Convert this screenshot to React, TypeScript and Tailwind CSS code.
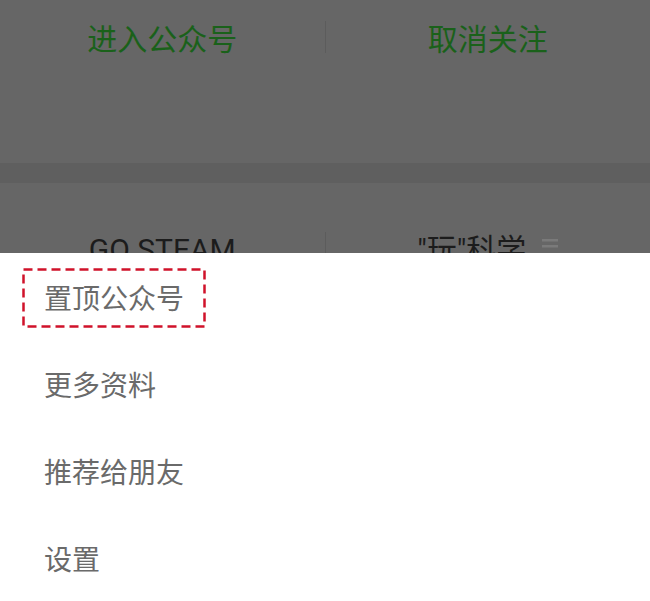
import React from 'react'

const font = { fontFamily: '"Noto Sans CJK SC", "Noto Sans", sans-serif' }
const latin = { fontFamily: 'Roboto, "Noto Sans CJK SC", sans-serif' }

function MenuIcon() {
  return (
    <svg width="16" height="14" viewBox="0 0 16 14" className="ml-[16px] mt-[3px]">
      <rect x="0" y="1" width="16" height="2.5" fill="#7a7a7a" />
      <rect x="0" y="7" width="16" height="2.5" fill="#7a7a7a" />
    </svg>
  )
}

function MenuItem({ label, marked }: { label: string; marked?: boolean }) {
  return (
    <div className="h-[87px] flex items-center pl-[44px]">
      <span className="relative text-[28px] leading-none text-[#6a6a6a]">
        {label}
        {marked && (
          <svg className="absolute left-[-22px] top-[-15px]" width="184" height="60" viewBox="0 0 184 60">
            <rect
              x="1.5"
              y="1.5"
              width="181"
              height="57"
              fill="none"
              stroke="#d0122a"
              strokeWidth="2.5"
              strokeDasharray="9 5"
            />
          </svg>
        )}
      </span>
    </div>
  )
}

export default function App() {
  return (
    <div className="w-[650px] h-[601px] overflow-hidden bg-[#666666] flex flex-col" style={font}>
      <div className="flex items-center h-[74px] shrink-0">
        <div className="flex-1 text-center text-[30px] leading-none text-[#1a611a]">进入公众号</div>
        <div className="w-px h-[32px] bg-[#5c5c5c]" />
        <div className="flex-1 text-center text-[30px] leading-none text-[#1a611a]">取消关注</div>
      </div>
      <div className="h-[89px] shrink-0" />
      <div className="h-[20px] shrink-0 bg-[#5f5f5f]" />
      <div className="h-[70px] shrink-0 overflow-hidden">
        <div className="pt-[52px]">
          <div className="flex items-start h-[60px]">
            <div className="flex-1 text-center text-[30px] leading-none text-[#1c1c1c]" style={latin}>
              GO STEAM
            </div>
            <div className="w-px h-[32px] bg-[#5c5c5c] mt-[-3px]" />
            <div className="flex-1 flex items-start justify-center text-[30px] leading-none text-[#1c1c1c]">
              <span style={latin}>"玩"科学</span>
              <MenuIcon />
            </div>
          </div>
        </div>
      </div>
      <div className="flex-1 bg-white">
        <MenuItem label="置顶公众号" marked />
        <MenuItem label="更多资料" />
        <MenuItem label="推荐给朋友" />
        <MenuItem label="设置" />
      </div>
    </div>
  )
}
